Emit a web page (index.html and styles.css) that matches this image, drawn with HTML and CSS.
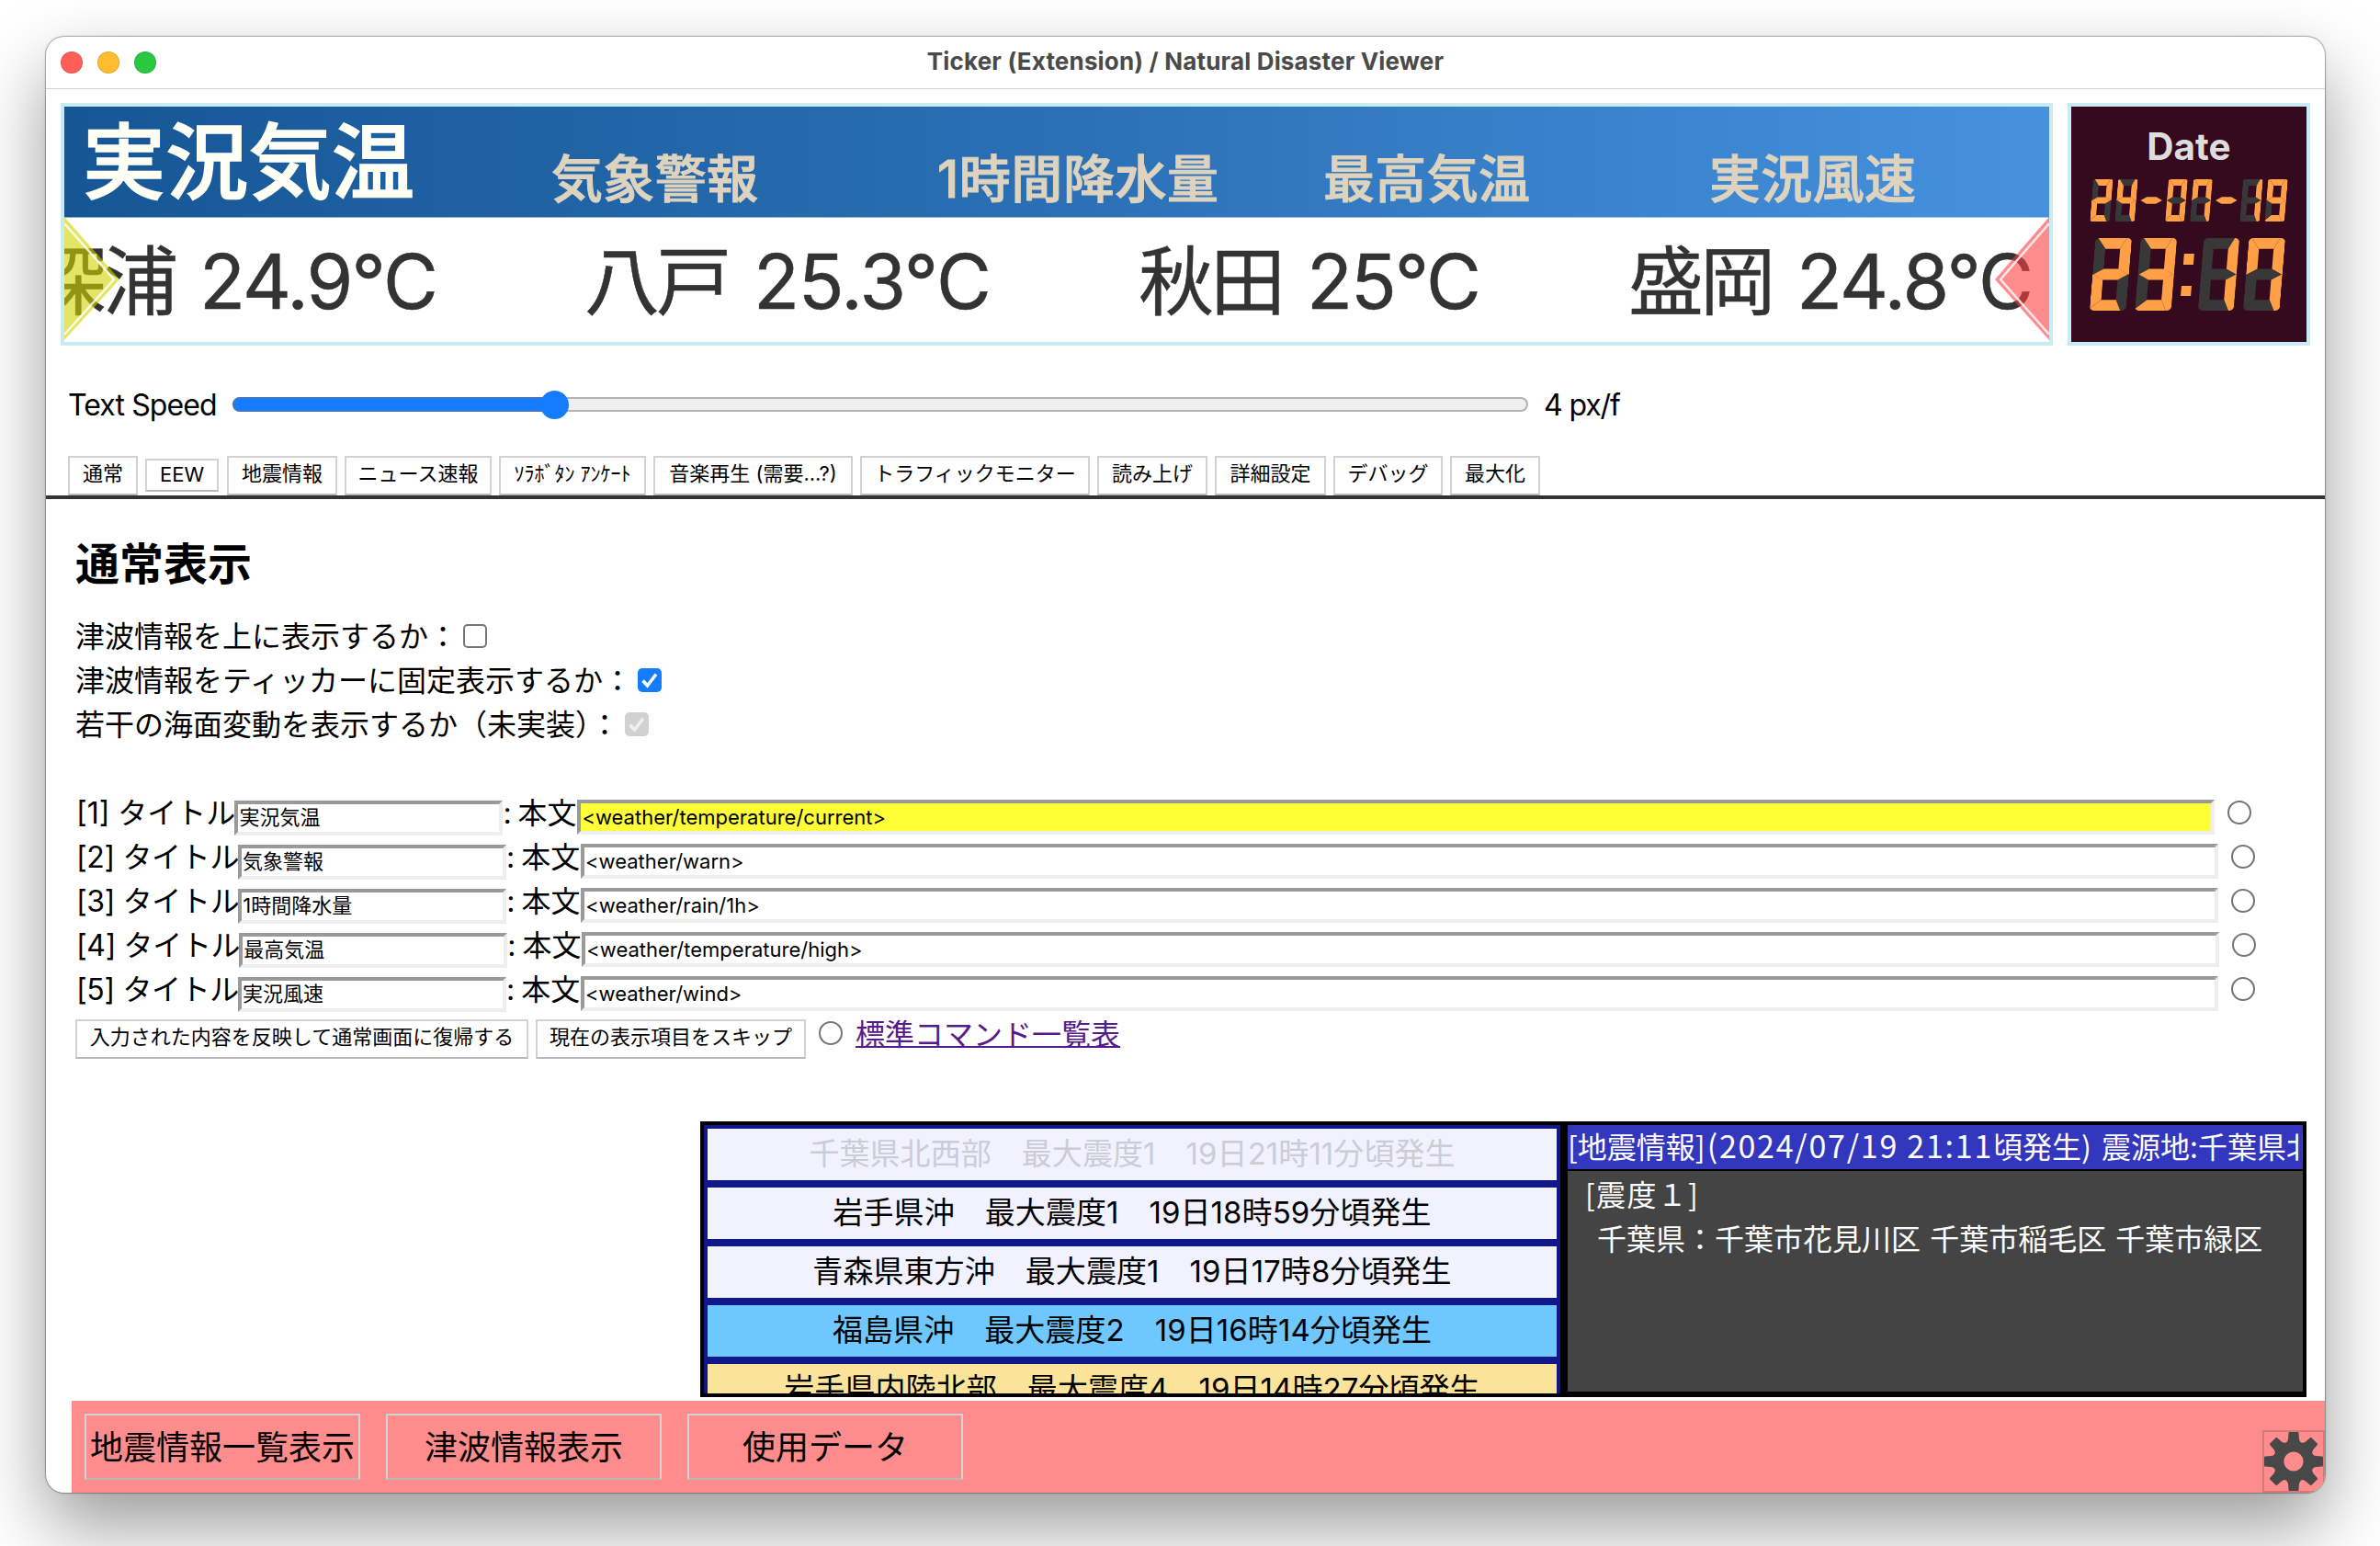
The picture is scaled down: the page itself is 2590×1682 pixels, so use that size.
FILE: index.html
```html
<!DOCTYPE html>
<html lang="ja">
<head>
<meta charset="utf-8">
<title>Ticker (Extension) / Natural Disaster Viewer</title>
<link rel="stylesheet" href="styles.css">
</head>
<body>
<div class="window">
  <header class="titlebar">
    <div class="lights"><span class="light close"></span><span class="light minimize"></span><span class="light expand"></span></div>
    <div class="window-title">Ticker (Extension) / Natural Disaster Viewer</div>
  </header>

  <section class="displays">
    <svg class="ticker" viewBox="0 0 2160 256" width="2160" height="256">
      <defs>
        <linearGradient id="sky" x1="0" y1="0" x2="1" y2="0">
          <stop offset="0" stop-color="#165695"/><stop offset="0.5" stop-color="#2b70b5"/><stop offset="1" stop-color="#4692df"/>
        </linearGradient>
      </defs>
      <rect width="2160" height="256" fill="#fff"/>
      <rect width="2160" height="120.5" fill="url(#sky)"/>
      <text class="tk-title" x="20" y="93" textLength="361">実況気温</text>
      <g class="tk-next">
        <text x="530" y="99" textLength="225">気象警報</text>
        <text x="950" y="99" textLength="306">1時間降水量</text>
        <text x="1370" y="99" textLength="225">最高気温</text>
        <text x="1790" y="99" textLength="225">実況風速</text>
      </g>
      <g class="tk-body">
        <text x="-36" y="220" textLength="160">深浦</text><text x="147" y="220" textLength="260">24.9°C</text>
        <text x="566" y="220" textLength="160">八戸</text><text x="750" y="220" textLength="259">25.3°C</text>
        <text x="1169" y="220" textLength="160">秋田</text><text x="1352" y="220" textLength="190">25°C</text>
        <text x="1702" y="220" textLength="160">盛岡</text><text x="1885" y="220" textLength="258">24.8°C</text>
      </g>
      <path d="M0 120L60 188L0 254Z" fill="rgba(208,212,0,.6)"/>
      <path d="M0 127L54 188L0 248" fill="none" stroke="#fff" stroke-opacity=".8" stroke-width="2.5"/>
      <path d="M2160 120L2101 188L2160 254Z" fill="rgba(255,64,64,.6)"/>
      <path d="M2160 127L2107 188L2160 248" fill="none" stroke="#fff" stroke-opacity=".8" stroke-width="2.5"/>
    </svg>
    <div class="clock">
      <div class="clock-label">Date</div>
      <div class="segments small" role="img" aria-label="24-07-19">
        <span class="digit n2"><i></i><i></i><i></i><i></i><i></i><i></i><i></i></span>
        <span class="digit n4"><i></i><i></i><i></i><i></i><i></i><i></i><i></i></span>
        <span class="digit dash"><i></i></span>
        <span class="digit n0"><i></i><i></i><i></i><i></i><i></i><i></i><i></i></span>
        <span class="digit n7"><i></i><i></i><i></i><i></i><i></i><i></i><i></i></span>
        <span class="digit dash"><i></i></span>
        <span class="digit n1"><i></i><i></i><i></i><i></i><i></i><i></i><i></i></span>
        <span class="digit n9"><i></i><i></i><i></i><i></i><i></i><i></i><i></i></span>
      </div>
      <div class="segments big" role="img" aria-label="23:17">
        <span class="digit n2"><i></i><i></i><i></i><i></i><i></i><i></i><i></i></span>
        <span class="digit n3"><i></i><i></i><i></i><i></i><i></i><i></i><i></i></span>
        <span class="colon"><b></b><b></b></span>
        <span class="digit n1"><i></i><i></i><i></i><i></i><i></i><i></i><i></i></span>
        <span class="digit n7"><i></i><i></i><i></i><i></i><i></i><i></i><i></i></span>
      </div>
    </div>
  </section>

  <section class="speed">
    <span class="speed-label">Text Speed</span>
    <div class="slider"><div class="slider-fill"><span class="knob"></span></div></div>
    <span class="speed-value">4 px/f</span>
  </section>

  <nav class="tabs">
    <button>通常</button><button class="low">EEW</button><button>地震情報</button><button>ニュース速報</button><button>ｿﾗﾎﾞﾀﾝ ｱﾝｹｰﾄ</button><button>音楽再生 (需要...?)</button><button>トラフィックモニター</button><button>読み上げ</button><button>詳細設定</button><button>デバッグ</button><button>最大化</button>
  </nav>

  <main class="panel">
    <h1>通常表示</h1>
    <div class="option"><span>津波情報を上に表示するか：</span><span class="check"></span></div>
    <div class="option"><span>津波情報をティッカーに固定表示するか：</span><span class="check on"><svg viewBox="0 0 26 26"><path d="M5.5 13.5L10.5 19L20 6.5"/></svg></span></div>
    <div class="option"><span>若干の海面変動を表示するか（未実装）：</span><span class="check on off"><svg viewBox="0 0 26 26"><path d="M5.5 13.5L10.5 19L20 6.5"/></svg></span></div>

    <div class="messages">
      <div class="message"><label>[1] タイトル</label><div class="field name">実況気温</div><label class="mid">: 本文</label><div class="field body active">&lt;weather/temperature/current&gt;</div><span class="radio"></span></div>
      <div class="message"><label>[2] タイトル</label><div class="field name">気象警報</div><label class="mid">: 本文</label><div class="field body">&lt;weather/warn&gt;</div><span class="radio"></span></div>
      <div class="message"><label>[3] タイトル</label><div class="field name">1時間降水量</div><label class="mid">: 本文</label><div class="field body">&lt;weather/rain/1h&gt;</div><span class="radio"></span></div>
      <div class="message"><label>[4] タイトル</label><div class="field name">最高気温</div><label class="mid">: 本文</label><div class="field body">&lt;weather/temperature/high&gt;</div><span class="radio"></span></div>
      <div class="message"><label>[5] タイトル</label><div class="field name">実況風速</div><label class="mid">: 本文</label><div class="field body">&lt;weather/wind&gt;</div><span class="radio"></span></div>
    </div>
    <div class="actions">
      <button>入力された内容を反映して通常画面に復帰する</button>
      <button>現在の表示項目をスキップ</button>
      <span class="radio"></span>
      <a href="#">標準コマンド一覧表</a>
    </div>
  </main>

  <section class="quakes">
    <div class="quake-list">
      <div class="quake seen">千葉県北西部　最大震度1　19日21時11分頃発生</div>
      <div class="quake">岩手県沖　最大震度1　19日18時59分頃発生</div>
      <div class="quake">青森県東方沖　最大震度1　19日17時8分頃発生</div>
      <div class="quake level2">福島県沖　最大震度2　19日16時14分頃発生</div>
      <div class="quake level4">岩手県内陸北部　最大震度4　19日14時27分頃発生</div>
    </div>
    <div class="quake-detail">
      <div class="detail-head">[地震情報]<span class="stamp">(2024/07/19 21:11</span>頃発生) 震源地:千葉県北</div>
      <div class="detail-body"><p class="level">[震度１]</p><p class="areas">千葉県：千葉市花見川区 千葉市稲毛区 千葉市緑区</p></div>
    </div>
  </section>

  <footer class="bottom">
    <button>地震情報一覧表示</button><button>津波情報表示</button><button>使用データ</button>
    <div class="gear">
      <svg viewBox="-32 -32 64 64" width="64" height="64">
        <g fill="#484848">
          <path id="tooth" d="M-4.5 -32H4.5Q5.5 -32 5.5 -31L6 -24Q6.5 -21 10 -19H-10Q-6.5 -21 -6 -24L-5.5 -31Q-5.5 -32 -4.5 -32Z"/>
          <use href="#tooth" transform="rotate(45)"/><use href="#tooth" transform="rotate(90)"/><use href="#tooth" transform="rotate(135)"/><use href="#tooth" transform="rotate(180)"/><use href="#tooth" transform="rotate(225)"/><use href="#tooth" transform="rotate(270)"/><use href="#tooth" transform="rotate(315)"/>
        </g>
        <circle r="16.3" fill="none" stroke="#484848" stroke-width="11.4"/>
      </svg>
    </div>
  </footer>
</div>
</body>
</html>
```
FILE: styles.css
```css
* { box-sizing: border-box; }
body {
  margin: 0;
  height: 1682px;
  padding: 40px 50px;
  background: #fff;
  overflow: hidden;
  color: #000;
  font: 32px/48px Inter, "Noto Sans CJK JP", sans-serif;
}
.window {
  width: 2480px;
  height: 1584px;
  display: flex;
  flex-direction: column;
  background: #fff;
  border-radius: 20px;
  overflow: hidden;
  box-shadow: 0 0 0 1px rgba(0,0,0,.2), 0 0 3px rgba(0,0,0,.3), 0 36px 80px rgba(0,0,0,.4);
}
button {
  margin: 0;
  padding: 0;
  background: none;
  border: 2px solid #d2d2d2;
  border-bottom-color: #b9b9b9;
  color: #000;
  font-family: inherit;
  font-size: 22px;
  line-height: 30px;
  white-space: nowrap;
}

/* title bar */
.titlebar {
  flex: none;
  height: 57px;
  display: grid;
  grid-template-columns: 1fr auto 1fr;
  align-items: center;
  border-bottom: 1px solid #d3d3d3;
}
.lights { display: flex; gap: 16px; padding-left: 16px; }
.light { width: 24px; height: 24px; border-radius: 50%; border: 1px solid rgba(0,0,0,.1); }
.close { background: #ff5f57; }
.minimize { background: #febc2e; }
.expand { background: #2ac840; }
.window-title { padding-bottom: 2px; font-size: 26px; font-weight: 700; line-height: 32px; color: #4a4a4a; letter-spacing: .17px; }

/* ticker and clock */
.displays { flex: none; display: flex; gap: 16px; padding: 15px 16px 0; }
.ticker { box-sizing: content-box; border: 4px solid #c8ebf4; display: block; }
.ticker text { font-family: Inter, "Noto Sans CJK JP", sans-serif; }
.tk-title { font-size: 90px; font-weight: 500; fill: #fffff5; stroke: #fffff5; stroke-width: 1.6px; }
.tk-next { font-size: 56px; font-weight: 500; fill: #ddd3be; stroke: #ddd3be; stroke-width: 1px; }
.tk-body { font-size: 82px; font-weight: 400; fill: #333; stroke: #333; stroke-width: .5px; }
.clock {
  width: 264px;
  height: 264px;
  border: 4px solid #c8ebf4;
  background: #350a1f;
  display: flex;
  flex-direction: column;
}
.clock-label { margin-top: 19px; text-align: center; font-size: 40.5px; font-weight: 700; line-height: 50px; color: #ddd; }
.segments { display: flex; transform: skewX(-4.7deg); }
.small { font-size: 46px; gap: 5.6px; margin: 10px 0 0 22px; --w: .47em; }
.big { font-size: 79px; gap: 9.6px; margin: 18px 0 0 23px; --w: .505em; }
.digit { position: relative; flex: none; width: var(--w); height: 1em; border-radius: .06em; overflow: hidden; }
.digit i { position: absolute; inset: 0; background: #383838; }
.digit i:nth-child(1) { clip-path: polygon(8% 0, 86% 0, 70% 15%, 30% 15%); }
.digit i:nth-child(2) { clip-path: polygon(86% 0, 100% 0, 100% 50%, 97% 50%, 70% 43%, 70% 15%); }
.digit i:nth-child(3) { clip-path: polygon(97% 50%, 100% 50%, 100% 100%, 84% 100%, 70% 85%, 70% 57%); }
.digit i:nth-child(4) { clip-path: polygon(0 97%, 0 100%, 84% 100%, 70% 85%, 30% 85%); }
.digit i:nth-child(5) { clip-path: polygon(0 50%, 3% 50%, 30% 57%, 30% 85%, 0 97%); }
.digit i:nth-child(6) { clip-path: polygon(8% 0, 0 0, 0 50%, 3% 50%, 30% 43%, 30% 15%); }
.digit i:nth-child(7) { clip-path: polygon(3% 50%, 30% 42.5%, 70% 42.5%, 97% 50%, 70% 57.5%, 30% 57.5%); }
.n0 i:not(:nth-child(7)),
.n1 i:nth-child(2), .n1 i:nth-child(3),
.n2 i:not(:nth-child(3)):not(:nth-child(6)),
.n3 i:not(:nth-child(5)):not(:nth-child(6)),
.n4 i:nth-child(2), .n4 i:nth-child(3), .n4 i:nth-child(6), .n4 i:nth-child(7),
.n7 i:nth-child(1), .n7 i:nth-child(2), .n7 i:nth-child(3), .n7 i:nth-child(6),
.n9 i:not(:nth-child(5)) { background: #ff9f46; }
.digit.dash { overflow: visible; }
.digit.dash i { inset: 0 -1px; background: #ff9f46; clip-path: polygon(0 50%, 28% 42%, 72% 42%, 100% 50%, 72% 58%, 28% 58%); }
.colon { width: 11px; margin: 0 -1px; display: flex; flex-direction: column; justify-content: space-between; padding: 17px 0 16px; }
.colon b { height: 11.5px; background: #ff9f46; }

/* speed slider */
.speed { flex: none; display: flex; align-items: center; height: 48px; margin-top: 40px; padding-left: 24px; }
.speed-label { width: 179px; padding-top: 2px; letter-spacing: -.9px; }
.slider { width: 1410px; height: 16px; border: 2px solid #b2b2b2; border-radius: 8px; background: #efefef; }
.slider-fill { width: 353px; height: 16px; margin: -2px; border: 2px solid #3e78c4; border-radius: 8px; background: #157bff; display: flex; justify-content: flex-end; align-items: center; }
.knob { flex: none; width: 31px; height: 31px; margin-right: -15px; border-radius: 50%; background: #157bff; }
.speed-value { margin-left: 17px; padding-top: 2px; letter-spacing: -1.1px; }

/* tabs */
.tabs {
  flex: none;
  display: grid;
  grid-template-columns: 76px 81px 120px 160px 160px 217px 250px 120px 121px 119px 98px;
  column-gap: 8px;
  height: 79px;
  padding: 32px 0 0 24px;
  border-bottom: 4px solid #333;
}
.tabs button { height: 43px; padding-bottom: 5px; }
.tabs .low { width: 80px; height: 36px; margin-top: 3px; padding: 0 0 2px; }

/* settings panel */
.panel { flex: none; height: 677px; padding: 47px 0 0 32px; }
h1 { margin: 0 0 30px; font-size: 48px; line-height: 48px; font-weight: 700; }
.option { display: flex; align-items: center; height: 48px; gap: 6px; white-space: nowrap; }
.option > span:first-child { padding-top: 2px; }
.check { width: 26px; height: 26px; border: 2px solid #767676; border-radius: 5px; display: block; }
.check.on { border: 0; background: #157bff; }
.check.off { background: #d1d1d1; }
.check svg { display: block; width: 26px; height: 26px; fill: none; stroke: #fff; stroke-width: 3.6; }
.check.off svg { stroke: #f0f0f0; }
.messages { margin-top: 48px; }
.message { display: flex; align-items: center; height: 48px; white-space: nowrap; }
.message label { padding-top: 2px; }
.message label:first-child { padding-left: 1px; margin-right: -1px; }
.message + .message label:first-child { letter-spacing: -.35px; }
.field {
  height: 38px;
  border: 4px solid;
  border-color: #9a9a9a #eee #eee #9a9a9a;
  padding-left: 1px;
  font-size: 22px;
  line-height: 28px;
}
.name { width: 292px; margin-top: 12px; }
.message .mid { width: 81px; word-spacing: -2px; }
.body { width: 1782px; margin-top: 10px; line-height: 31px; }
.active { background: #ffff38; }
.radio { width: 26px; height: 26px; border: 2px solid #767676; border-radius: 50%; }
.body + .radio { margin-left: 14px; }
.actions { display: flex; margin-top: 9px; }
.actions button { height: 43px; width: 493px; margin-right: 8px; padding-bottom: 5px; }
.actions button + button { width: 294px; margin-right: 14px; }
.actions .radio { margin: 2px 14px 0 0; }
.actions a { color: #551a8b; line-height: 34px; text-decoration-thickness: 2px; }

/* earthquake board */
.quakes {
  flex: none;
  width: 1748px;
  height: 300px;
  margin-left: 712px;
  display: flex;
  gap: 8px;
  border: 4px solid #000;
  background: #000;
}
.quake-list { width: 932px; height: 292px; padding: 0 4px; background: #101889; overflow: hidden; }
.quake {
  height: 64px;
  border: solid #101889;
  border-width: 4px 0;
  background: #f2f2ff;
  text-align: center;
  font-size: 33px;
  letter-spacing: .06px;
  line-height: 54px;
  white-space: nowrap;
}
.seen { color: #ccccd5; }
.level2 { background: #6ec8ff; }
.level4 { background: #fbe49a; }
.quake-detail { width: 800px; color: #fff; font-family: "Noto Sans CJK JP", sans-serif; font-weight: 400; }
.detail-head { height: 52px; border-bottom: 4px solid #000; background: #3337bd; overflow: hidden; white-space: nowrap; line-height: 44px; word-spacing: 4px; }
.stamp { margin-left: 2px; font-size: 34px; letter-spacing: 1.75px; word-spacing: 0; }
.detail-body { height: 240px; background: #444; padding: 0 0 0 19px; }
.detail-body p { margin: 0; line-height: 48px; white-space: nowrap; }
.detail-body .level { margin-top: -2px; letter-spacing: 1.3px; }
.detail-body .areas { padding-left: 13px; word-spacing: 3px; }

/* bottom bar */
.bottom {
  flex: none;
  display: flex;
  gap: 28px;
  width: 2452px;
  height: 100px;
  margin: 4px 0 0 28px;
  padding: 14px 0 0 14px;
  background: #ff8c8c;
}
.bottom button { width: 300px; height: 72px; padding-top: 2px; font-size: 36px; line-height: 44px; }
.gear { width: 68px; height: 68px; margin: 18px 0 0 auto; border: 2px solid #d67878; }
.gear svg { display: block; }
```
